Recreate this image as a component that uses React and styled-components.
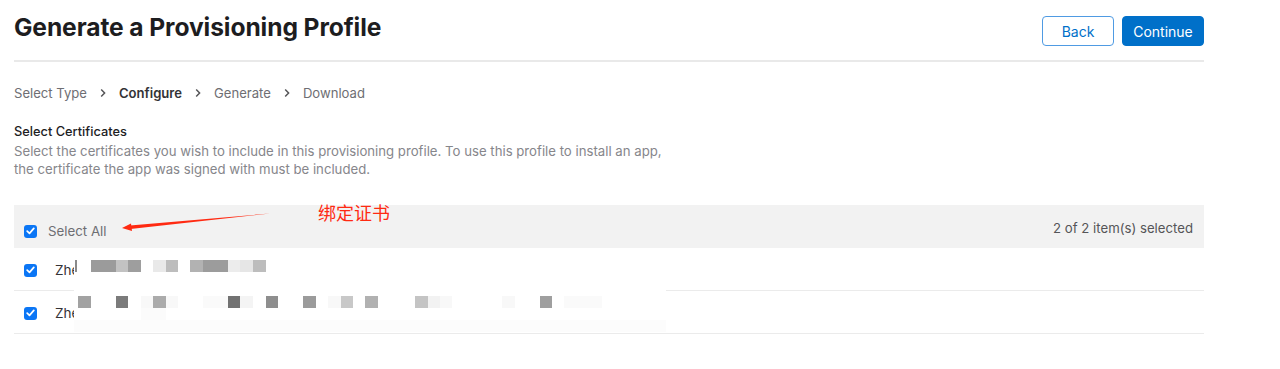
import styled, { createGlobalStyle } from "styled-components";

const GlobalStyle = createGlobalStyle`
  html, body {
    margin: 0;
    padding: 0;
    background: #ffffff;
  }
  body {
    font-family: Inter, "Noto Sans", "Noto Sans CJK SC", sans-serif;
    -webkit-font-smoothing: antialiased;
  }
`;

const Page = styled.div`
  width: 1190px;
  margin-left: 14px;
`;

const Header = styled.header`
  display: flex;
  justify-content: space-between;
  align-items: flex-start;
  height: 44px;
  padding-top: 16px;
  border-bottom: 2px solid #e9e9e9;
`;

const Title = styled.h1`
  margin: 0;
  margin-top: -3px;
  font-size: 24.6px;
  line-height: 28px;
  font-weight: 700;
  color: #1d1d1f;
  letter-spacing: -0.1px;
`;

const Actions = styled.div`
  display: flex;
  gap: 8px;
`;

const Button = styled.button`
  height: 30px;
  width: ${({ $w }) => $w}px;
  padding: 0;
  border-radius: 4px;
  font-family: inherit;
  font-size: 14px;
  cursor: pointer;
  border: 1px solid ${({ $primary }) => ($primary ? "#0070c9" : "#4f9be3")};
  background: ${({ $primary }) => ($primary ? "#0070c9" : "#ffffff")};
  color: ${({ $primary }) => ($primary ? "#ffffff" : "#0070c9")};
`;

const Crumbs = styled.nav`
  display: flex;
  align-items: center;
  gap: 13px;
  margin-top: 21px;
  height: 20px;
  font-size: 13.1px;
  color: #6e6e73;
`;

const Crumb = styled.span`
  font-weight: ${({ $active }) => ($active ? 600 : 400)};
  color: ${({ $active }) => ($active ? "#333336" : "#6e6e73")};
`;

const Chevron = styled.span`
  display: inline-flex;
  width: 6px;
  justify-content: center;
`;

const Section = styled.section`
  margin-top: 20px;
`;

const SectionTitle = styled.div`
  font-size: 12.8px;
  font-weight: 500;
  color: #1d1d1f;
  line-height: 18px;
`;

const Description = styled.p`
  margin: 1px 0 0;
  font-size: 13.2px;
  line-height: 18px;
  color: #86868b;
`;

const Table = styled.div`
  position: relative;
  margin-top: 27px;
`;

const HeadRow = styled.div`
  display: flex;
  align-items: flex-end;
  justify-content: space-between;
  height: 43px;
  padding: 0 11px 9px 10px;
  box-sizing: border-box;
  background: #f2f2f2;
`;

const HeadLabel = styled.label`
  display: flex;
  align-items: center;
  gap: 11px;
  font-size: 13.3px;
  color: #6e6e73;
`;

const Count = styled.span`
  font-size: 13.2px;
  color: #555558;
  margin-bottom: 3px;
`;

const Row = styled.div`
  display: flex;
  align-items: center;
  gap: 18px;
  height: 43px;
  box-sizing: border-box;
  padding: 2px 10px 0;
  border-bottom: 1px solid #ebebeb;
  font-size: 13.5px;
  color: #333336;
`;

const Box = styled.span`
  display: inline-flex;
  align-items: center;
  justify-content: center;
  width: 13px;
  height: 13px;
  border-radius: 3px;
  background: #0b76f5;
  flex: none;
`;

const Redaction = styled.div`
  position: absolute;
  left: 60px;
  top: 45px;
  width: 592px;
  height: 82px;
  background: linear-gradient(#ffffff 85%, #fcfcfc 85%);
`;

const Pixel = styled.span`
  position: absolute;
  height: 12px;
`;

const Note = styled.span`
  position: absolute;
  left: 304px;
  top: -4px;
  font-size: 18px;
  line-height: 22px;
  color: #ff2a12;
  font-family: "Noto Sans CJK SC", sans-serif;
`;

const Arrow = styled.svg`
  position: absolute;
  left: 106px;
  top: 6px;
`;

function Check() {
  return (
    <Box>
      <svg width="9" height="8" viewBox="0 0 9 8">
        <path
          d="M1.2 4.2 L3.5 6.4 L7.8 1.4"
          fill="none"
          stroke="#fff"
          strokeWidth="1.7"
          strokeLinecap="round"
          strokeLinejoin="round"
        />
      </svg>
    </Box>
  );
}

function Chev() {
  return (
    <Chevron>
      <svg width="6" height="10" viewBox="0 0 6 10">
        <path d="M1.2 1.5 L4.6 5 L1.2 8.5" fill="none" stroke="#555558" strokeWidth="1.5" />
      </svg>
    </Chevron>
  );
}

// [x, y, w, color] relative to the redaction box
const pixels = [
  [1, 10, 2, "#8a8a8a"],
  [17, 10, 25, "#9b9b9b"],
  [42, 10, 12, "#c2c2c2"],
  [54, 10, 13, "#9e9e9e"],
  [79, 10, 13, "#e9e9e9"],
  [92, 10, 12, "#bdbdbd"],
  [116, 10, 13, "#b2b2b2"],
  [129, 10, 25, "#9c9c9c"],
  [154, 10, 12, "#ececec"],
  [166, 10, 13, "#e6e6e6"],
  [179, 10, 13, "#bdbdbd"],
  [4, 46, 13, "#a2a2a2"],
  [42, 46, 12, "#7b7b7b"],
  [67, 46, 12, "#f8f8f8"],
  [79, 46, 13, "#ababab"],
  [92, 46, 12, "#f8f8f8"],
  [129, 46, 25, "#fafafa"],
  [154, 46, 12, "#727272"],
  [166, 46, 13, "#f4f4f4"],
  [192, 46, 12, "#8e8e8e"],
  [229, 46, 13, "#9b9b9b"],
  [254, 46, 13, "#f8f8f8"],
  [267, 46, 12, "#c8c8c8"],
  [291, 46, 13, "#b1b1b1"],
  [341, 46, 13, "#c4c4c4"],
  [354, 46, 12, "#f2f2f2"],
  [366, 46, 12, "#f8f8f8"],
  [428, 46, 13, "#f8f8f8"],
  [466, 46, 12, "#9f9f9f"],
  [490, 46, 38, "#fafafa"],
  [67, 58, 25, "#fbfbfb"],
];

export default function App() {
  return (
    <>
      <GlobalStyle />
      <Page>
        <Header>
          <Title>Generate a Provisioning Profile</Title>
          <Actions>
            <Button $w={72}>Back</Button>
            <Button $primary $w={82}>
              Continue
            </Button>
          </Actions>
        </Header>

        <Crumbs>
          <Crumb>Select Type</Crumb>
          <Chev />
          <Crumb $active>Configure</Crumb>
          <Chev />
          <Crumb>Generate</Crumb>
          <Chev />
          <Crumb>Download</Crumb>
        </Crumbs>

        <Section>
          <SectionTitle>Select Certificates</SectionTitle>
          <Description>
            Select the certificates you wish to include in this provisioning profile. To use this profile to install an app,
            <br />
            the certificate the app was signed with must be included.
          </Description>
        </Section>

        <Table>
          <HeadRow>
            <HeadLabel>
              <Check />
              Select All
            </HeadLabel>
            <Count>2 of 2 item(s) selected</Count>
          </HeadRow>
          <Row>
            <Check />
            Zhen
          </Row>
          <Row>
            <Check />
            Zhen
          </Row>

          <Redaction>
            {pixels.map(([x, y, w, c], i) => (
              <Pixel key={i} style={{ left: x, top: y, width: w, background: c }} />
            ))}
          </Redaction>

          <Arrow width="152" height="22" viewBox="0 0 152 22">
            <path d="M150 2.5 L10 14.5 L10.5 18 Z" fill="#ff2a12" />
            <path d="M2 17 L11 12.5 L12 20 Z" fill="#ff2a12" />
          </Arrow>
          <Note>绑定证书</Note>
        </Table>
      </Page>
    </>
  );
}
